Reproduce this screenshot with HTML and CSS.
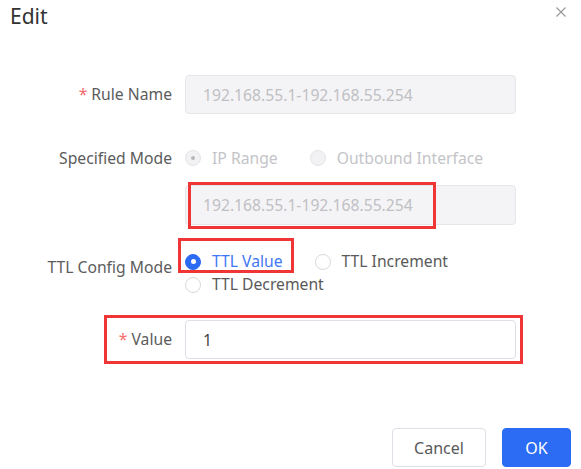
FILE: index.html
```html
<!DOCTYPE html>
<html lang="en">
<head>
  <meta charset="UTF-8">
  <title>Edit</title>
  <link rel="stylesheet" href="styles.css">
</head>
<body>
  <div class="dialog">
    <header class="dialog-head">
      <h2 class="dialog-title">Edit</h2>
      <button class="dialog-close" type="button" aria-label="Close">
        <svg viewBox="0 0 10 10" width="10" height="10">
          <path d="M0.5 0.5 L9.5 9.5 M9.5 0.5 L0.5 9.5" stroke="#9a9a9a" stroke-width="1.2" fill="none"/>
        </svg>
      </button>
    </header>

    <form class="form">
      <div class="row row-rule">
        <label class="label"><span class="req">*</span>Rule Name</label>
        <div class="control">
          <input class="input" type="text" value="192.168.55.1-192.168.55.254" disabled>
        </div>
      </div>

      <div class="row row-mode">
        <label class="label">Specified Mode</label>
        <div class="control">
          <div class="radios">
            <span class="radio is-disabled is-checked"><i class="dot"></i>IP Range</span>
            <span class="radio is-disabled"><i class="dot"></i>Outbound Interface</span>
          </div>
        </div>
      </div>

      <div class="row row-range">
        <div class="label"></div>
        <div class="control has-mark">
          <input class="input" type="text" value="192.168.55.1-192.168.55.254" disabled>
          <span class="mark mark-range"></span>
        </div>
      </div>

      <div class="row row-ttl">
        <label class="label label-ttl">TTL Config Mode</label>
        <div class="control">
          <div class="radios radios-wrap">
            <span class="radio is-checked has-mark"><i class="dot"></i>TTL Value<span class="mark mark-ttl"></span></span>
            <span class="radio"><i class="dot"></i>TTL Increment</span>
            <span class="radio"><i class="dot"></i>TTL Decrement</span>
          </div>
        </div>
      </div>

      <div class="row row-value has-mark">
        <label class="label"><span class="req">*</span>Value</label>
        <div class="control">
          <input class="input input-active" type="text" value="1">
        </div>
        <span class="mark mark-value"></span>
      </div>
    </form>

    <footer class="dialog-foot">
      <button class="btn" type="button">Cancel</button>
      <button class="btn btn-primary" type="button">OK</button>
    </footer>
  </div>
</body>
</html>
```

FILE: styles.css
```css
/* Dialog "Edit" */
body {
  margin: 0;
  background: #ffffff;
  font-family: "Noto Sans", "Open Sans", Arial, sans-serif;
  font-size: 15.7px;
  color: #5a5a5a;
}

.dialog {
  width: 581px;
  height: 469px;
  box-sizing: border-box;
  display: flex;
  flex-direction: column;
}

/* --- Header --- */
.dialog-head {
  display: flex;
  justify-content: space-between;
  align-items: flex-start;
  padding: 0 15px 0 10px;
  height: 34px;
}

.dialog-title {
  margin: 0;
  font-size: 21px;
  font-weight: 400;
  line-height: 32px;
  color: #333333;
}

.dialog-close {
  background: none;
  border: none;
  padding: 0;
  margin-top: 7px;
  width: 10px;
  height: 10px;
  cursor: pointer;
}
.dialog-close svg { display: block; }

/* --- Form --- */
.form {
  margin-top: 41px;
}

.row {
  display: flex;
  align-items: center;
  position: relative;
}

.label {
  width: 172px;
  flex: none;
  text-align: right;
  color: #5c5c5c;
  line-height: 23px;
}

.req {
  color: #f56c6c;
  margin-right: 4px;
}

.control {
  width: 331px;
  margin-left: 13px;
  position: relative;
}

.input {
  display: block;
  width: 100%;
  height: 39px;
  box-sizing: border-box;
  padding: 0 17px;
  border: 1px solid #e6e6ea;
  border-radius: 4px;
  background: #f4f4f6;
  color: #c0c0c4;
  font-family: inherit;
  font-size: inherit;
}

.input-active {
  background: #ffffff;
  border-color: #dcdfe6;
  color: #444444;
}

.row-mode { margin-top: 28px; height: 32px; }
.row-range { margin-top: 11px; }
.row-range .input { height: 40px; }
.row-ttl { margin-top: 25px; align-items: flex-start; }
.label-ttl { padding-top: 6px; }
.row-value { margin-top: 24px; }

/* Radio */
.radios {
  display: flex;
  align-items: center;
  height: 32px;
}

.radios-wrap {
  flex-wrap: wrap;
  height: auto;
}

.radio {
  display: inline-flex;
  align-items: center;
  flex: none;
  white-space: nowrap;
  line-height: 23px;
  margin-right: 32px;
  color: #5a5a5a;
  position: relative;
}

.dot {
  flex: none;
  width: 16px;
  height: 16px;
  box-sizing: border-box;
  border: 1px solid #d9d9dc;
  border-radius: 50%;
  background: #ffffff;
  margin-right: 11px;
  position: relative;
}

.radio.is-checked .dot {
  background: #2c6cf4;
  border-color: #2c6cf4;
}
.radio.is-checked .dot::after {
  content: "";
  position: absolute;
  left: 50%;
  top: 50%;
  width: 5px;
  height: 5px;
  margin: -2.5px 0 0 -2.5px;
  border-radius: 50%;
  background: #ffffff;
}
.radio.is-checked { color: #3f77f5; }

.radio.is-disabled { color: #c4c4c8; }
.radio.is-disabled .dot {
  background: #f2f2f4;
  border-color: #e4e4e7;
}
.radio.is-disabled.is-checked .dot::after { background: #b8b8bc; width: 4px; height: 4px; margin: -2px 0 0 -2px; }

/* Annotation boxes */
.mark {
  position: absolute;
  border: 3px solid #ef3535;
  box-sizing: border-box;
  pointer-events: none;
}
.mark-range { left: 3px; top: -3px; width: 248px; bottom: -4px; }
.mark-ttl { left: -7px; right: -11px; top: -12px; bottom: 0; }
.mark-value { left: 104px; width: 419px; top: -5px; bottom: -5px; }

/* --- Footer --- */
.dialog-foot {
  margin-top: auto;
  display: flex;
  justify-content: flex-end;
  gap: 16px;
  padding: 0 10px 2px 0;
}

.btn {
  height: 39px;
  min-width: 69px;
  padding: 0 20px;
  border: 1px solid #dcdfe6;
  border-radius: 4px;
  background: #ffffff;
  color: #5a5a5a;
  font-family: inherit;
  font-size: 16px;
  cursor: pointer;
}
.btn:first-child { width: 94px; }

.btn-primary {
  background: #2c6cf4;
  border-color: #2c6cf4;
  color: #ffffff;
}
```
